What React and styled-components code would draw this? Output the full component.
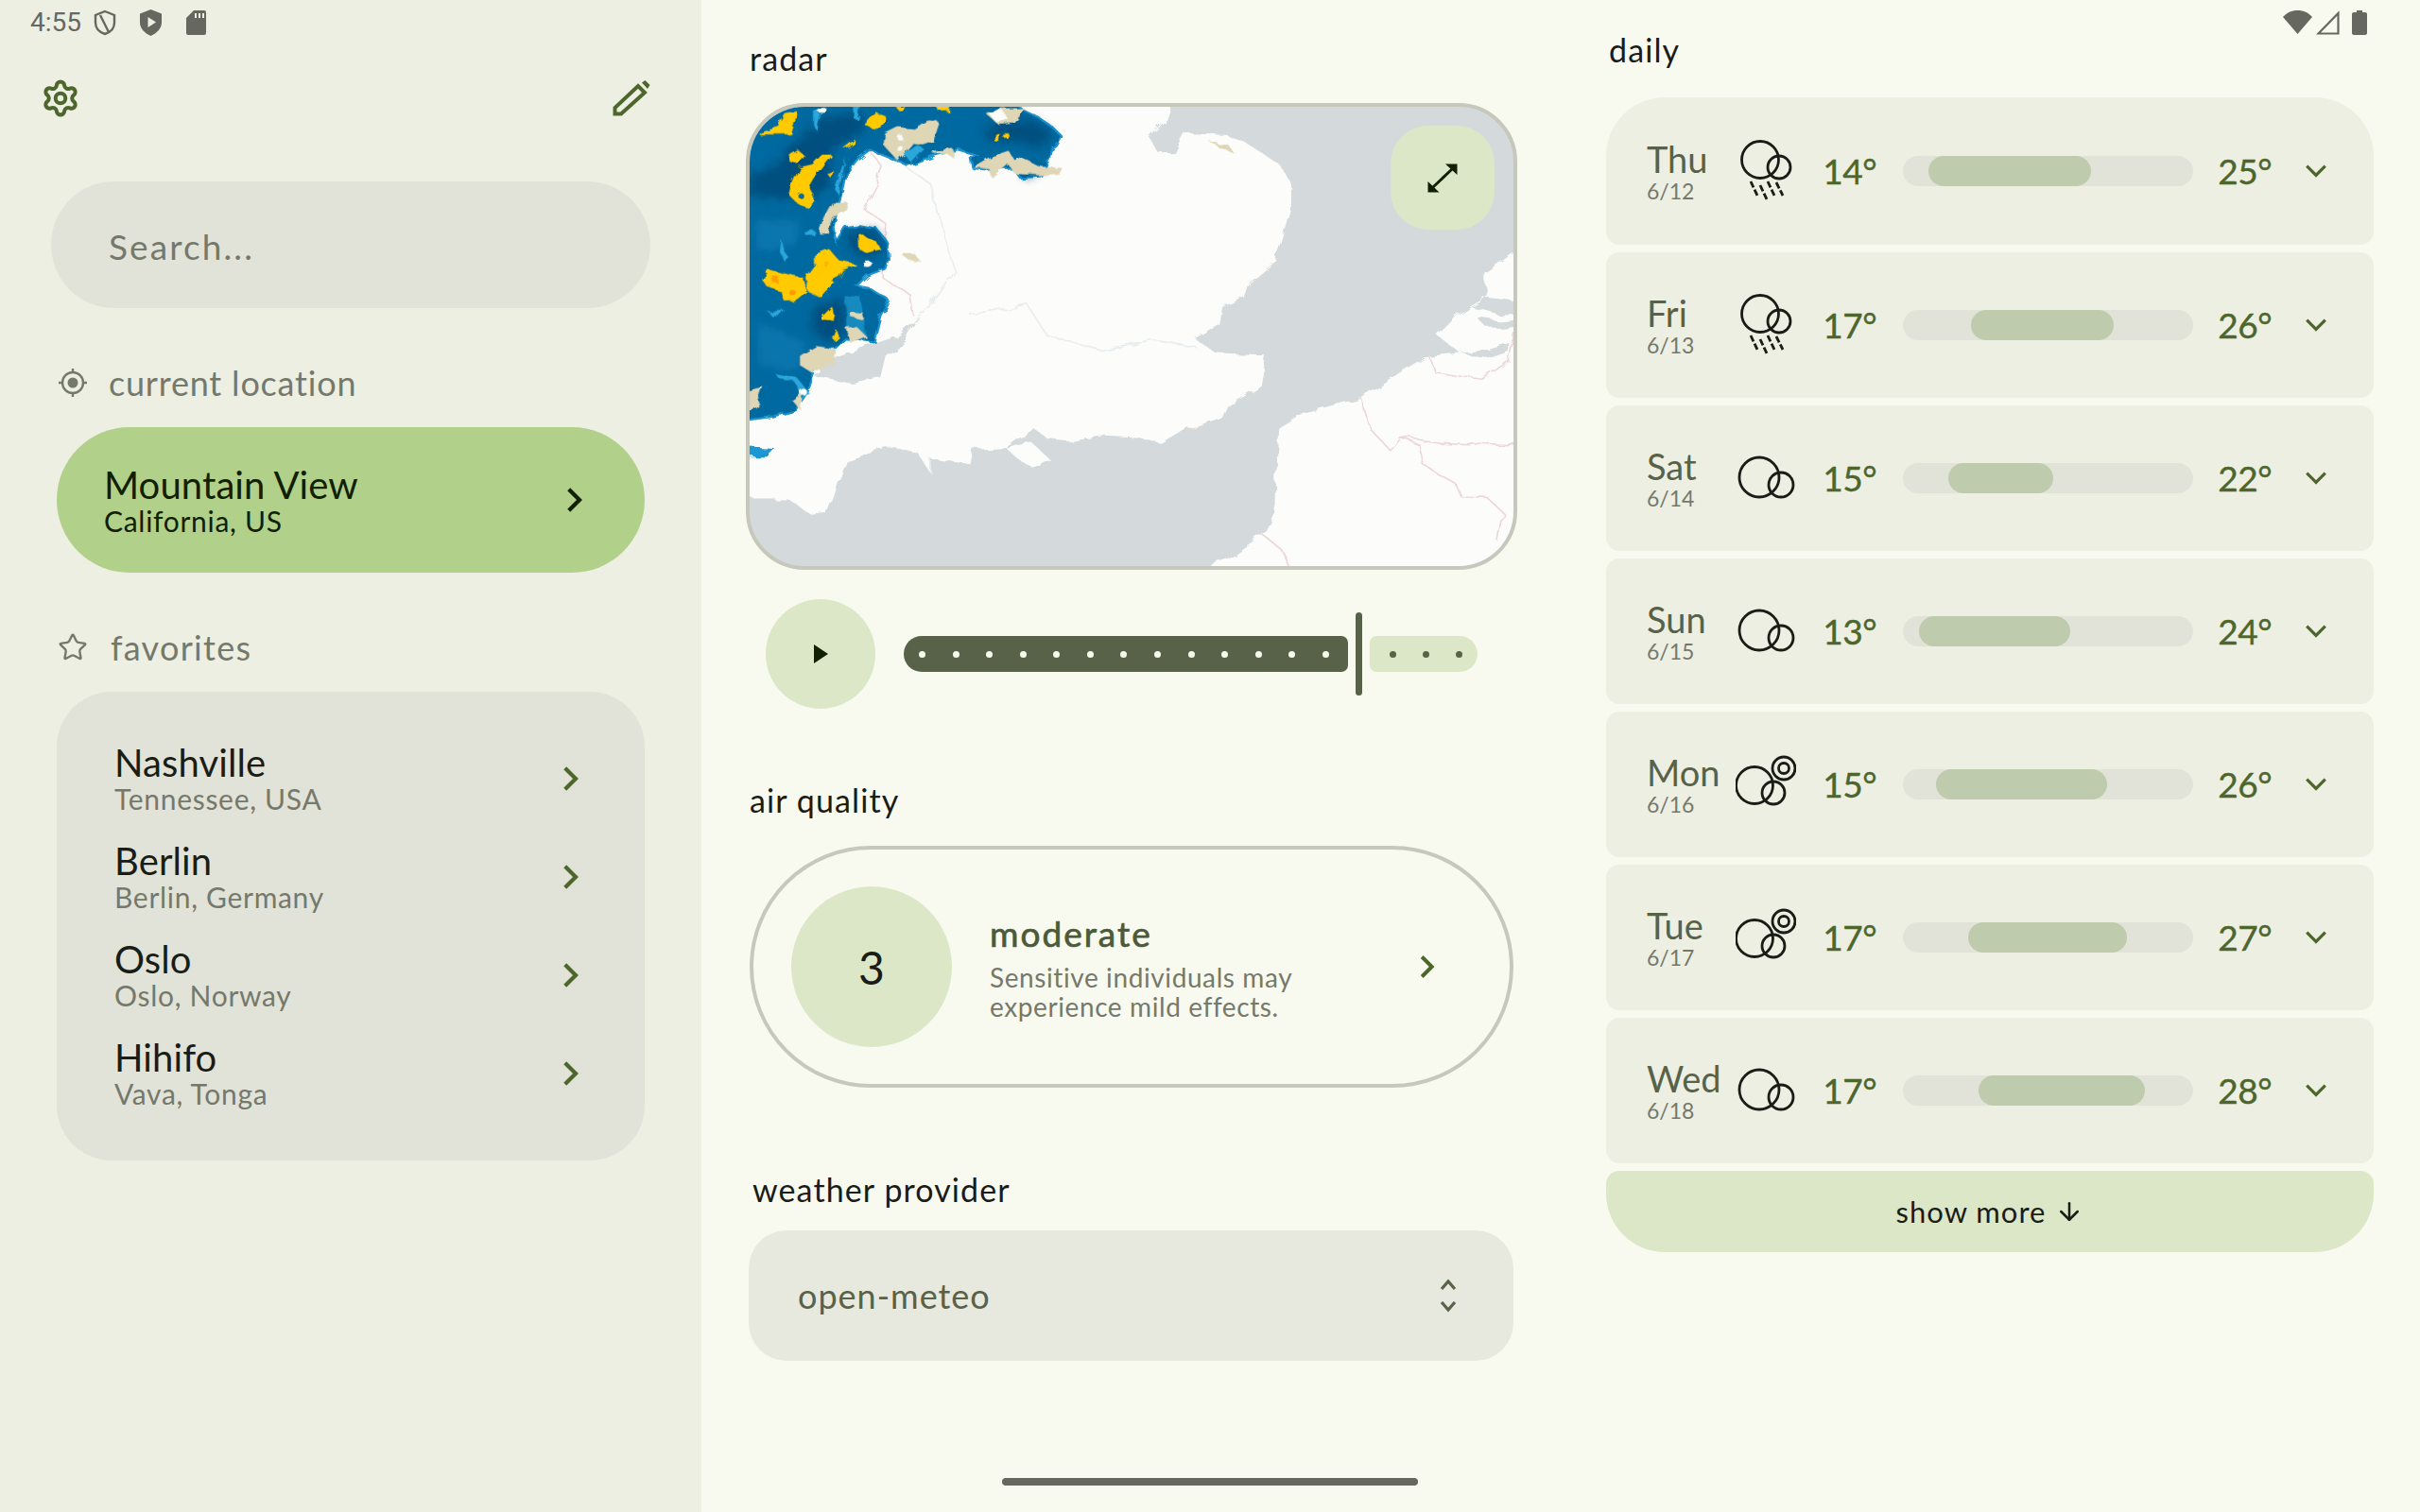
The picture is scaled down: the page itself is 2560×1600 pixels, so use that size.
import styled, { createGlobalStyle } from 'styled-components';
import { Settings, Star, ArrowDown } from 'lucide-react';

const GlobalStyle = createGlobalStyle`
  html, body { margin: 0; padding: 0; background: #f9faef; }
  * { box-sizing: border-box; }
`;

const Page = styled.div`
  position: relative;
  display: flex;
  width: 2560px;
  height: 1600px;
  overflow: hidden;
  background: #f9faef;
  color: #1a1c16;
  font-family: "Lato", "Noto Sans", sans-serif;
`;

/* status bar + gesture handle sit over the app */
const StatusLeft = styled.div`
  position: absolute;
  top: 9px;
  left: 32px;
  display: flex;
  align-items: center;
  color: #666860;
  font-family: "Roboto", sans-serif;
  font-size: 28px;
  line-height: 30px;
  svg { display: block; }
`;

const StatusTime = styled.span`
  width: 67px;
`;

const StatusRight = styled.div`
  position: absolute;
  top: 11px;
  left: 2415px;
  display: flex;
  align-items: flex-start;
  color: #666860;
  svg { display: block; }
`;

const HomeBar = styled.div`
  position: absolute;
  left: 1060px;
  top: 1564px;
  width: 440px;
  height: 8px;
  border-radius: 4px;
  background: #666860;
`;

/* left rail */
const Rail = styled.aside`
  width: 742px;
  flex: none;
  height: 100%;
  padding-top: 85px;
  background: #eeefe3;
`;

const RailTools = styled.div`
  display: flex;
  justify-content: space-between;
  align-items: center;
  height: 38px;
  padding: 0 54px 0 43px;
  color: #4c662b;
`;

const SearchBox = styled.div`
  display: flex;
  align-items: center;
  height: 134px;
  margin: 69px 54px 0;
  padding: 2px 0 0 61px;
  border-radius: 67px;
  background: #e2e3d8;
  color: #75796c;
  font-size: 37px;
  letter-spacing: 2.1px;
`;

const RailLabel = styled.div`
  display: flex;
  align-items: center;
  height: 44px;
  margin-top: ${(p) => p.$top}px;
  padding-left: 61px;
  color: #75796c;
  font-size: 36px;
  letter-spacing: ${(p) => p.$track}px;
  svg { flex: none; width: 32px; margin-right: ${(p) => p.$gap}px; }
`;

const CurrentCard = styled.div`
  display: flex;
  align-items: center;
  justify-content: space-between;
  height: 154px;
  margin: 25px 60px 0;
  padding: 0 59px 0 50px;
  border-radius: 77px;
  background: #b1d18a;
  color: #102000;
`;

const FavPanel = styled.div`
  margin: 25px 60px 0;
  padding: 40px 0;
  border-radius: 58px;
  background: #e2e3d8;
`;

const FavRow = styled.div`
  display: flex;
  align-items: center;
  justify-content: space-between;
  height: 104px;
  padding: 0 63px 0 61px;
  color: #4c662b;
`;

const FavText = styled.div`
  margin-bottom: 2px;
`;

const PlaceName = styled.div`
  color: ${(p) => (p.$dark ? '#102000' : '#1a1c16')};
  font-size: 40px;
  line-height: 44px;
  letter-spacing: 0.1px;
`;

const PlaceSub = styled.div`
  color: ${(p) => (p.$dark ? '#102000' : '#75796c')};
  font-size: 30px;
  line-height: 32px;
  letter-spacing: 0.7px;
`;

/* middle column */
const Middle = styled.main`
  width: 957px;
  flex: none;
  padding: 42px 0 0 47px;
`;

const SectionTitle = styled.div`
  height: 44px;
  margin-top: ${(p) => p.$top || 0}px;
  padding-left: ${(p) => p.$pad || 4}px;
  font-size: 34px;
  line-height: 40px;
  letter-spacing: 1.1px;
`;

const MapFrame = styled.div`
  position: relative;
  width: 816px;
  height: 494px;
  margin-top: 23px;
  overflow: hidden;
  border: 4px solid #c5c8ba;
  border-radius: 62px;
  background: #d4d9dc;
  svg.map { display: block; width: 100%; height: 100%; }
`;

const ExpandButton = styled.div`
  position: absolute;
  top: 20px;
  right: 20px;
  display: flex;
  align-items: center;
  justify-content: center;
  width: 110px;
  height: 110px;
  border-radius: 40px;
  background: #dce7c8;
  color: #102000;
`;

const Player = styled.div`
  display: flex;
  align-items: center;
  height: 116px;
  margin-top: 31px;
  padding-left: 21px;
`;

const PlayButton = styled.div`
  display: flex;
  align-items: center;
  justify-content: center;
  flex: none;
  width: 116px;
  height: 116px;
  margin-right: 30px;
  border-radius: 50%;
  background: #dce7c8;
  color: #102000;
`;

const Track = styled.div`
  display: flex;
  align-items: center;
  justify-content: space-between;
  width: ${(p) => p.$width}px;
  height: 38px;
  background: ${(p) => (p.$active ? '#586249' : '#dce7c8')};
  border-radius: ${(p) => (p.$active ? '19px 7px 7px 19px' : '7px 19px 19px 7px')};
  padding: ${(p) => (p.$active ? '0 20px 0 16px' : '0 16px 0 21px')};
`;

const Dot = styled.span`
  width: 7px;
  height: 7px;
  border-radius: 50%;
  background: ${(p) => (p.$active ? '#f9faef' : '#586249')};
`;

const Thumb = styled.div`
  width: 7px;
  height: 88px;
  margin: 0 8px;
  border-radius: 4px;
  background: #586249;
`;

const AirCard = styled.div`
  display: flex;
  align-items: center;
  width: 808px;
  height: 256px;
  margin: 24px 0 0 4px;
  padding-left: 40px;
  border: 4px solid #c5c8ba;
  border-radius: 128px;
`;

const AirBadge = styled.div`
  display: flex;
  align-items: center;
  justify-content: center;
  flex: none;
  width: 170px;
  height: 170px;
  margin-right: 40px;
  border-radius: 50%;
  background: #dce7c8;
  font-size: 48px;
`;

const AirText = styled.div`
  width: 449px;
`;

const AirTitle = styled.div`
  margin-bottom: 9px;
  color: #4b5a38;
  font-size: 37px;
  line-height: 44px;
  letter-spacing: 2px;
  -webkit-text-stroke: 0.7px #4b5a38;
`;

const AirBody = styled.div`
  color: #75796c;
  font-size: 28px;
  line-height: 31px;
  letter-spacing: 0.6px;
`;

const AirChevron = styled.span`
  display: flex;
  color: #4c662b;
`;

const ProviderSelect = styled.div`
  display: flex;
  align-items: center;
  justify-content: space-between;
  width: 809px;
  height: 138px;
  margin: 19px 0 0 3px;
  padding: 0 60px 0 52px;
  border-radius: 40px;
  background: #e8e9de;
  color: #586249;
  font-size: 36px;
  letter-spacing: 1px;
  svg { display: block; }
`;

/* forecast column */
const Forecast = styled.section`
  width: 812px;
  flex: none;
  padding-top: 33px;
`;

const DayList = styled.div`
  display: flex;
  flex-direction: column;
  gap: 8px;
  margin-top: 26px;
`;

const DayRow = styled.div`
  display: grid;
  grid-template-columns: 94px 64px 85px 335px 83px 1fr;
  align-items: center;
  height: ${(p) => (p.$first ? 156 : 154)}px;
  padding-left: 43px;
  background: #eeefe3;
  border-radius: ${(p) => (p.$first ? '62px 62px 14px 14px' : '14px')};
`;

const DayName = styled.div`
  color: #586249;
  font-size: 38px;
  line-height: 42px;
`;

const DayDate = styled.div`
  color: #75796c;
  font-size: 23px;
  line-height: 26px;
`;

const Temp = styled.div`
  margin-bottom: 2px;
  color: #4c662b;
  font-size: 37px;
  text-align: right;
  letter-spacing: -0.5px;
  -webkit-text-stroke: 0.4px #4c662b;
`;

const RangeTrack = styled.div`
  position: relative;
  width: 307px;
  height: 32px;
  margin-left: 28px;
  border-radius: 16px;
  background: #e2e3d8;
`;

const RangeFill = styled.div`
  position: absolute;
  top: 0;
  bottom: 0;
  border-radius: 16px;
  background: #bfcbad;
`;

const DayChevron = styled.div`
  display: flex;
  justify-content: center;
  color: #4c662b;
  padding-right: 14px;
  svg { display: block; }
`;

const ShowMore = styled.div`
  display: flex;
  align-items: center;
  justify-content: center;
  gap: 10px;
  height: 86px;
  border-radius: 14px 14px 62px 62px;
  background: #dce7c8;
  font-size: 31px;
  letter-spacing: 1px;
`;

const days = [
  { name: 'Thu', date: '6/12', icon: 'rain', low: 14, high: 25, from: 2040, to: 2212, first: true },
  { name: 'Fri', date: '6/13', icon: 'rain', low: 17, high: 26, from: 2085, to: 2236 },
  { name: 'Sat', date: '6/14', icon: 'cloud', low: 15, high: 22, from: 2061, to: 2172 },
  { name: 'Sun', date: '6/15', icon: 'cloud', low: 13, high: 24, from: 2030, to: 2190 },
  { name: 'Mon', date: '6/16', icon: 'sun', low: 15, high: 26, from: 2048, to: 2229 },
  { name: 'Tue', date: '6/17', icon: 'sun', low: 17, high: 27, from: 2082, to: 2250 },
  { name: 'Wed', date: '6/18', icon: 'cloud', low: 17, high: 28, from: 2093, to: 2269 },
];

const favorites = [
  ['Nashville', 'Tennessee, USA'],
  ['Berlin', 'Berlin, Germany'],
  ['Oslo', 'Oslo, Norway'],
  ['Hihifo', 'Vava, Tonga'],
];

const Chevron = ({ dir = 'right', size = 22, width = 3.4 }) => {
  const pts = {
    right: '7,3 16,12 7,21',
    down: '3,7 12,16 21,7',
    up: '3,16 12,7 21,16',
  }[dir];
  return (
    <svg width={size} height={size} viewBox="0 0 24 24" fill="none" stroke="currentColor" strokeWidth={width}>
      <polyline points={pts} />
    </svg>
  );
};

const WeatherIcon = ({ kind }) => (
  <svg width="64" height="72" viewBox="0 0 64 72" fill="none" stroke="#1a1c16" strokeWidth="2.8">
    {kind === 'rain' && (
      <g>
        <circle cx="26" cy="24" r="19.5" />
        <circle cx="46" cy="32" r="12" />
        <g strokeDasharray="7 2.5">
          <line x1="16" y1="47" x2="23" y2="62" />
          <line x1="26" y1="51" x2="33" y2="66" />
          <line x1="34" y1="47" x2="41" y2="62" />
          <line x1="43" y1="48" x2="50" y2="62" />
        </g>
      </g>
    )}
    {kind === 'sun' && (
      <g>
        <circle cx="20" cy="37" r="19.5" />
        <circle cx="40" cy="45" r="12" />
        <circle cx="51" cy="19" r="12" />
        <circle cx="51" cy="19" r="5.5" />
      </g>
    )}
    {kind === 'cloud' && (
      <g>
        <circle cx="25" cy="35" r="21" />
        <circle cx="48" cy="43" r="13" />
      </g>
    )}
  </svg>
);

const SeaPath = ({ d }) => <path d={d} fill="#d4d9dc" />;

const Line = ({ d, color }) => (
  <path d={d} fill="none" stroke={color} strokeWidth="1.6" vectorEffect="non-scaling-stroke" />
);

const Blob = ({ d, color, w = 3 }) => <path d={d} fill={color} stroke={color} strokeWidth={w} strokeLinejoin="round" />;

const rainEdge =
  'M20 30 L880 30 L900 50 L960 80 L1000 110 L1025 135 L1010 160 L990 175 L985 205 L960 255 L900 260 L880 230 L810 235 L750 230 L745 200 L770 190 L700 170 L620 190 L540 220 L505 205 L420 170 L380 200 L340 250 L320 340 L300 420 L310 480 L345 425 L385 420 L440 430 L470 470 L475 520 L465 550 L410 570 L370 610 L420 620 L475 655 L450 700 L430 780 L340 770 L300 810 L240 880 L220 940 L180 1000 L100 1020 L20 1030 Z';

const RadarMap = () => (
  <svg className="map" viewBox="793 113 808 486" preserveAspectRatio="none">
    <defs>
      <filter id="soft"><feGaussianBlur stdDeviation="2" /></filter>
      <filter id="softer"><feGaussianBlur stdDeviation="14" /></filter>
      <filter id="coast" x="-2%" y="-2%" width="104%" height="104%" colorInterpolationFilters="sRGB">
        <feTurbulence type="fractalNoise" baseFrequency="0.05" numOctaves="3" seed="7" />
        <feDisplacementMap in="SourceGraphic" scale="10" />
      </filter>
      <filter id="cells" x="-2%" y="-2%" width="104%" height="104%" colorInterpolationFilters="sRGB">
        <feTurbulence type="fractalNoise" baseFrequency="0.09" numOctaves="2" seed="3" />
        <feDisplacementMap in="SourceGraphic" scale="7" />
      </filter>
    </defs>
    {/* land, coordinates taken off a stretched crop */}
    <g filter="url(#coast)">
      <g transform="translate(760 30) scale(0.5612 0.3827)">
        <path
          fill="#fcfcfa"
          d="M20 190 L852 190 L852 235 L810 300 L830 345 L860 345 L880 290 L960 295 L1010 330 L1060 380 L1078 430 L1078 500 L1060 590 L1050 640 L1000 700 L990 745 L950 770 L945 820 L900 860 L940 900 L1030 905 L1020 990 L960 1040 L950 1075 L880 1110 L835 1150 L790 1130 L720 1125 L660 1140 L620 1135 L590 1100 L575 1130 L545 1160 L480 1165 L475 1205 L400 1190 L400 1230 L380 1180 L330 1155 L240 1195 L225 1250 L205 1340 L175 1345 L130 1300 L20 1300 Z"
        />
        <path fill="#fcfcfb" d="M545 1165 L590 1145 L620 1185 L590 1210 L560 1185 Z" />
        <path
          fill="#fcfcfa"
          d="M1540 590 L1500 620 L1440 680 L1450 740 L1395 790 L1355 850 L1400 900 L1330 910 L1210 1020 L1100 1060 L1055 1100 L1050 1340 L1030 1400 L960 1470 L880 1510 L1540 1510 Z"
        />
        <SeaPath d="M380 795 L340 850 L225 905 L180 960 L250 980 L305 965 L315 905 L350 860 Z" />
        <SeaPath d="M1540 760 L1450 745 L1420 770 L1470 790 L1540 790 Z" />
        <SeaPath d="M1430 800 L1480 810 L1540 800 L1540 815 L1480 830 L1450 830 Z" />
        <SeaPath d="M1400 895 L1450 885 L1490 870 L1490 890 L1440 915 Z" />
        <Line color="#ecd6da" d="M1210 1020 L1230 1110 L1265 1165 L1285 1130 L1320 1150 L1330 1210 L1390 1260 L1400 1295 L1450 1300 L1480 1340 L1470 1420" />
        <Line color="#ecd6da" d="M1285 1130 L1360 1145 L1430 1150 L1505 1155" />
        <Line color="#ecd6da" d="M1340 910 L1350 950 L1410 965 L1440 970 L1490 920 L1505 800" />
        <Line color="#ecd6da" d="M1025 1400 L1060 1440 L1078 1497" />
        <Line color="#ecd6da" d="M285 340 L310 385 L300 430 L275 500 L315 540 L310 690 L360 735 L365 790" />
        <Line color="#e8edef" d="M350 380 L400 430 L445 670 L400 760 L370 800" />
        <Line color="#e8edef" d="M470 790 L580 760 L620 850 L720 890 L820 860 L900 880" />
        <path fill="#dfd6b6" d="M925 315 L960 320 L975 350 L950 330 Z" />
        <path fill="#1b97d2" d="M40 1155 L105 1160 L90 1182 L40 1182 Z" />
      </g>
    </g>
    {/* radar overlay, true 3x crop coordinates */}
    <g filter="url(#cells)">
      <g transform="translate(780 100) scale(0.3333)">
        <g filter="url(#soft)">
          <Blob color="#1b93cf" w={16} d={rainEdge} />
          <Blob color="#00699f" d={rainEdge} />
        </g>
        <g filter="url(#softer)">
          <path fill="#01507f" d="M36 260 L130 220 L160 170 L280 70 L400 60 L400 120 L300 170 L290 290 L240 330 L100 330 L36 320 Z" />
          <path fill="#01507f" d="M780 110 L850 80 L960 90 L1000 130 L960 170 L880 150 L800 150 Z" />
          <path fill="#01507f" d="M250 670 L340 650 L340 760 L290 790 L230 740 Z" />
          <path fill="#01507f" d="M360 430 L440 430 L465 500 L400 520 L350 480 Z" />
          <path fill="#01507f" d="M905 235 L950 225 L955 255 L915 262 Z" />
          <path fill="#1b84bd" d="M60 400 L200 400 L180 480 L60 500 Z" opacity="0.5" />
          <path fill="#1b84bd" d="M60 720 L220 790 L190 880 L70 860 Z" opacity="0.45" />
        </g>
        <g filter="url(#soft)">
          <path fill="#2aa7dc" d="M140 460 L150 500 L165 520 L150 530 L135 500 Z" />
          <path fill="#2aa7dc" d="M100 690 L150 685 L140 700 L105 700 Z" />
          <path fill="#2aa7dc" d="M120 885 L190 900 L230 950 L205 960 L180 910 L130 900 Z" />
          <path fill="#2aa7dc" d="M530 190 L570 160 L590 170 L550 215 Z" />
          <path fill="#2aa7dc" d="M240 50 L265 45 L250 110 L240 100 Z" />
          <path fill="#2aa7dc" d="M370 40 L390 40 L385 80 L372 80 Z" />
          <path fill="#2aa7dc" d="M210 435 L245 430 L240 445 L215 445 Z" />
          <path fill="#2aa7dc" d="M330 235 L345 200 L320 320 L310 300 Z" />
          <path fill="#2aa7dc" d="M340 640 L390 640 L410 770 L350 740 Z" opacity="0.55" />
          <Blob color="#dfd6b6" d="M470 125 L510 105 L560 110 L600 85 L640 90 L620 150 L590 160 L560 155 L530 190 L510 210 L465 160 Z" />
          <Blob color="#dfd6b6" d="M620 185 L680 170 L690 205 L670 190 Z" />
          <Blob color="#dfd6b6" d="M750 230 L800 200 L860 180 L880 210 L900 200 L960 230 L1030 235 L1020 250 L960 255 L880 250 L860 220 L810 265 L800 235 Z" />
          <Blob color="#dfd6b6" d="M790 60 L840 45 L910 45 L880 90 L830 95 Z" />
          <Blob color="#dfd6b6" d="M300 345 L350 345 L340 370 L300 390 L285 440 L260 440 L275 390 Z" />
          <Blob color="#dfd6b6" d="M345 740 L380 740 L410 770 L360 790 Z" />
          <Blob color="#dfd6b6" d="M200 830 L250 800 L315 810 L310 850 L240 885 L200 860 Z" />
          <Blob color="#dfd6b6" d="M36 940 L80 930 L60 990 L36 1015 Z" />
          <Blob color="#dfd6b6" d="M175 970 L205 950 L200 1000 Z" />
          <Blob color="#dfd6b6" d="M520 505 L560 505 L575 525 L550 530 Z" />
          <Blob color="#dfd6b6" d="M355 690 L400 695 L395 712 L360 705 Z" />
          <Blob color="#fcfcfb" d="M800 60 L840 50 L860 80 L820 85 Z" />
          <circle cx="515" cy="135" r="9" fill="#fcfcfb" />
          <circle cx="515" cy="170" r="9" fill="#fcfcfb" />
          <ellipse cx="415" cy="540" rx="15" ry="10" fill="#fcfcfb" />
          <circle cx="210" cy="945" r="11" fill="#fcfcfb" />
          <ellipse cx="270" cy="50" rx="16" ry="8" fill="#fcfcfb" />
          <Blob color="#ffcb00" d="M70 120 L130 100 L150 60 L190 55 L170 125 L70 125 Z" />
          <Blob color="#ffcb00" d="M405 95 L440 60 L470 70 L450 108 L425 105 Z" />
          <Blob color="#ffcb00" d="M165 190 L190 175 L212 195 L195 222 L170 215 Z" />
          <Blob color="#ffcb00" w={8} d="M200 235 L240 225 L270 195 L295 195 L245 260 L225 295 L240 320 L230 360 L190 340 L170 320 L180 280 Z" />
          <Blob color="#ffcb00" w={6} d="M388 445 L440 470 L450 490 L410 500 L390 490 Z" />
          <Blob color="#ffcb00" w={8} d="M250 510 L290 495 L320 530 L370 540 L330 555 L320 575 L290 590 L305 600 L265 640 L230 625 L220 580 L250 540 Z" />
          <Blob color="#ffcb00" w={8} d="M80 585 L100 560 L140 570 L205 585 L220 625 L190 650 L150 650 L140 620 L95 605 Z" />
          <Blob color="#ffcb00" d="M265 710 L300 675 L308 720 L270 715 Z" />
          <Blob color="#ffcb00" d="M305 775 L315 750 L322 770 L310 782 Z" />
          <Blob color="#ffcb00" d="M820 125 L830 125 L830 150 L820 150 Z" />
          <Blob color="#ffcb00" d="M845 128 L865 128 L860 136 L845 136 Z" />
          <Blob color="#ffcb00" d="M505 40 L530 40 L525 52 L515 52 Z" />
          <Blob color="#ffcb00" d="M635 40 L675 40 L670 52 L640 52 Z" />
          <Blob color="#ffcb00" d="M340 170 L372 145 L375 152 L345 172 Z" />
          <Blob color="#ffcb00" d="M285 250 L305 245 L295 262 Z" />
          <circle cx="200" cy="320" r="9" fill="#00699f" />
        </g>
        <g filter="url(#soft)">
          <circle cx="122" cy="588" r="11" fill="#ff9c00" />
          <circle cx="175" cy="630" r="10" fill="#ff9c00" />
          <circle cx="280" cy="535" r="8" fill="#ffae00" />
        </g>
      </g>
    </g>
  </svg>
);

const App = () => (
  <Page>
    <GlobalStyle />

    <Rail>
      <RailTools>
        <Settings size={42} strokeWidth={2.3} />
        <svg width="40" height="38" viewBox="0 0 40 38" fill="none" stroke="currentColor" strokeWidth="4">
          <path d="M2.5 35.5 V29 L27 6 L34 13 L9 35.5 Z" />
          <path d="M31 2.5 L34.5 0 L39.5 5 L37 9 Z" fill="currentColor" stroke="none" />
        </svg>
      </RailTools>

      <SearchBox>Search...</SearchBox>

      <RailLabel $top={57} $gap={22} $track={0.8}>
        <svg height="32" viewBox="0 0 32 32" fill="none" stroke="currentColor" strokeWidth="2.4">
          <circle cx="16" cy="16" r="11" />
          <circle cx="16" cy="16" r="5.5" fill="currentColor" stroke="none" />
          <path d="M16 1 V5 M16 27 V31 M1 16 H5 M27 16 H31" />
        </svg>
        current location
      </RailLabel>

      <CurrentCard>
        <div>
          <PlaceName $dark>Mountain View</PlaceName>
          <PlaceSub $dark>California, US</PlaceSub>
        </div>
        <Chevron size={30} />
      </CurrentCard>

      <RailLabel $top={57} $gap={24} $track={1.3}>
        <Star size={32} strokeWidth={1.8} />
        favorites
      </RailLabel>

      <FavPanel>
        {favorites.map(([name, sub]) => (
          <FavRow key={name}>
            <FavText>
              <PlaceName>{name}</PlaceName>
              <PlaceSub>{sub}</PlaceSub>
            </FavText>
            <Chevron size={30} />
          </FavRow>
        ))}
      </FavPanel>
    </Rail>

    <Middle>
      <SectionTitle>radar</SectionTitle>
      <MapFrame>
        <RadarMap />
        <ExpandButton>
          <svg width="32" height="31" viewBox="0 0 32 31" fill="currentColor" stroke="none">
            <path d="M19 0.5 H31.5 V12 Z M0.5 19 V30.5 H12.5 Z" />
            <line x1="6" y1="25" x2="26" y2="6" stroke="currentColor" strokeWidth="3" />
          </svg>
        </ExpandButton>
      </MapFrame>

      <Player>
        <PlayButton>
          <svg width="15" height="20" viewBox="0 0 15 20" fill="currentColor">
            <path d="M0 0 L15 10 L0 20 Z" />
          </svg>
        </PlayButton>
        <Track $active $width={470}>
          {Array.from({ length: 13 }, (_, i) => <Dot key={i} $active />)}
        </Track>
        <Thumb />
        <Track $width={114}>
          {Array.from({ length: 3 }, (_, i) => <Dot key={i} />)}
        </Track>
      </Player>

      <SectionTitle $top={77}>air quality</SectionTitle>
      <AirCard>
        <AirBadge>3</AirBadge>
        <AirText>
          <AirTitle>moderate</AirTitle>
          <AirBody>
            Sensitive individuals may
            <br />
            experience mild effects.
          </AirBody>
        </AirText>
        <AirChevron>
          <Chevron size={28} />
        </AirChevron>
      </AirCard>

      <SectionTitle $top={88} $pad={7}>weather provider</SectionTitle>
      <ProviderSelect>
        open-meteo
        <svg width="18" height="36" viewBox="0 0 18 36" fill="none" stroke="currentColor" strokeWidth="3.2">
          <path d="M2 11 L9 3 L16 11 M2 25 L9 33 L16 25" />
        </svg>
      </ProviderSelect>
    </Middle>

    <Forecast>
      <SectionTitle $pad={3}>daily</SectionTitle>
      <DayList>
        {days.map((d) => (
          <DayRow key={d.name} $first={d.first}>
            <div>
              <DayName>{d.name}</DayName>
              <DayDate>{d.date}</DayDate>
            </div>
            <WeatherIcon kind={d.icon} />
            <Temp>{d.low}°</Temp>
            <RangeTrack>
              <RangeFill style={{ left: d.from - 2013, width: d.to - d.from }} />
            </RangeTrack>
            <Temp>{d.high}°</Temp>
            <DayChevron>
              <Chevron dir="down" size={26} width={3} />
            </DayChevron>
          </DayRow>
        ))}
        <ShowMore>
          show more
          <ArrowDown size={30} strokeWidth={2} />
        </ShowMore>
      </DayList>
    </Forecast>

    <StatusLeft>
      <StatusTime>4:55</StatusTime>
      <svg width="24" height="28" viewBox="0 0 24 28" fill="none" stroke="currentColor" strokeWidth="2.4">
        <path d="M12 2 L22 6 V14 C22 20 18 24 12 26 C6 24 2 20 2 14 V6 Z" />
        <path d="M7 6 L16 24" />
      </svg>
      <svg style={{ marginLeft: 25 }} width="23" height="28" viewBox="0 0 23 28" fill="currentColor">
        <path fillRule="evenodd" d="M11.5 0 L23 4.5 V14 C23 20 18 25 11.5 28 C5 25 0 20 0 14 V4.5 Z M8.5 8 V19 L17 13.5 Z" />
      </svg>
      <svg style={{ marginLeft: 26 }} width="21" height="26" viewBox="0 0 21 26" fill="currentColor">
        <path fillRule="evenodd" d="M8 0 H19 A2 2 0 0 1 21 2 V24 A2 2 0 0 1 19 26 H2 A2 2 0 0 1 0 24 V8 Z M9 3 V8 H11 V3 Z M13 3 V8 H15 V3 Z M17 3 V8 H19 V3 Z" />
      </svg>
    </StatusLeft>

    <StatusRight>
      <svg width="31" height="25" viewBox="0 0 31 25" fill="currentColor">
        <path d="M15.5 25 L0 7 C4 2.5 9 0 15.5 0 C22 0 27 2.5 31 7 Z" />
      </svg>
      <svg style={{ marginLeft: 4 }} width="25" height="26" viewBox="0 0 25 26" fill="none" stroke="currentColor" strokeWidth="2.2">
        <path d="M23.5 3 V24.5 H2.5 Z" />
      </svg>
      <svg style={{ marginLeft: 13 }} width="16" height="26" viewBox="0 0 16 26" fill="currentColor">
        <path d="M5 0 H11 V2 H14 A2 2 0 0 1 16 4 V24 A2 2 0 0 1 14 26 H2 A2 2 0 0 1 0 24 V4 A2 2 0 0 1 2 2 H5 Z" />
      </svg>
    </StatusRight>

    <HomeBar />
  </Page>
);

export default App;
